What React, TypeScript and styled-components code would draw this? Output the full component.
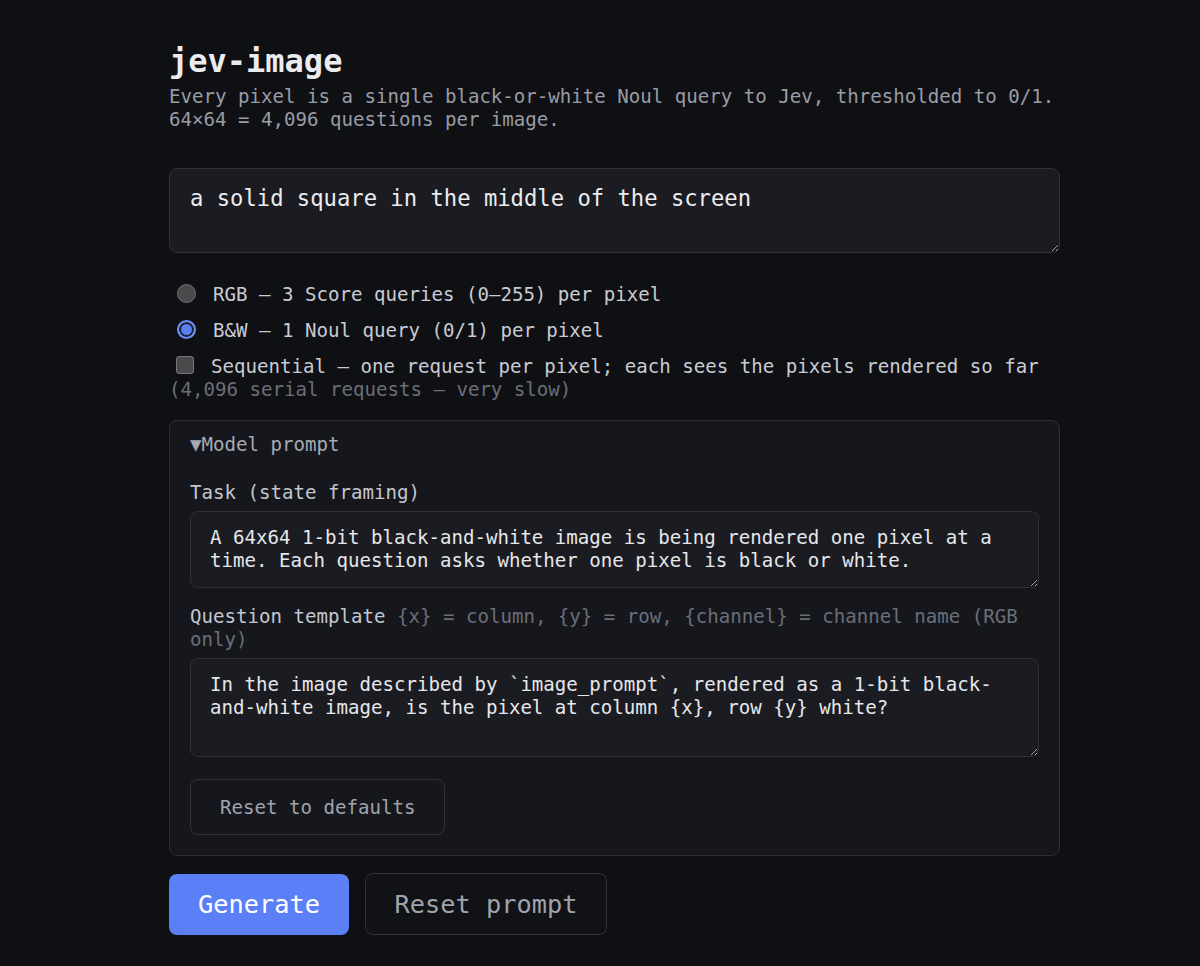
import React from "react";
import styled, { createGlobalStyle } from "styled-components";

const Global = createGlobalStyle`
  html, body { margin: 0; padding: 0; background: #0f1014; }
  body { font-family: "DejaVu Sans Mono", "Liberation Mono", monospace; color: #c9cbd3; }
  * { box-sizing: border-box; }
`;

const Page = styled.div`
  min-height: 966px;
  background: #0f1014;
  padding: 42px 0 40px 169px;
`;

const Column = styled.div`
  width: 891px;
  display: flex;
  flex-direction: column;
`;

const Title = styled.h1`
  margin: 0;
  font-size: 32px;
  line-height: 38px;
  font-weight: bold;
  color: #ececef;
`;

const Subtitle = styled.p`
  margin: 6px 0 0;
  font-size: 19.1px;
  line-height: 22.5px;
  color: #9a9ca6;
`;

const PromptArea = styled.textarea`
  margin-top: 37px;
  width: 100%;
  height: 85px;
  padding: 16px 20px;
  font-family: inherit;
  font-size: 22.2px;
  line-height: 26px;
  color: #ececf0;
  background: #1b1c21;
  border: 1px solid #2e3039;
  border-radius: 8px;
  outline: none;
  resize: vertical;
`;

const Options = styled.div`
  margin-top: 30px;
  display: flex;
  flex-direction: column;
  gap: 13px;
`;

const OptionLabel = styled.label`
  display: block;
  font-size: 19.1px;
  line-height: 23px;
  color: #c9cbd3;
`;

const Radio = styled.input.attrs({ type: "radio" })`
  appearance: none;
  width: 19px;
  height: 19px;
  margin: 0 17px 0 8px;
  vertical-align: -2px;
  border-radius: 50%;
  background: #4a4a4c;
  border: 1px solid #727276;
  &:checked {
    background: #5b7ff5;
    border: 2px solid #6e8ff7;
    box-shadow: inset 0 0 0 2px #1b1d26;
  }
`;

const Check = styled.input.attrs({ type: "checkbox" })`
  appearance: none;
  width: 18px;
  height: 18px;
  margin: 0 17px 0 7px;
  vertical-align: -1px;
  border-radius: 3px;
  background: #4a4a4c;
  border: 1px solid #77777b;
`;

const Hint = styled.span`
  color: #6b6e79;
`;

const Details = styled.details`
  margin-top: 19px;
  background: #15171d;
  border: 1px solid #2b2e37;
  border-radius: 8px;
  padding: 12px 20px 20px;
`;

const Summary = styled.summary`
  list-style: none;
  cursor: pointer;
  font-size: 19.1px;
  line-height: 23px;
  color: #a7aab3;
  &::-webkit-details-marker { display: none; }
`;

const FieldLabel = styled.div<{ $top: number }>`
  margin-top: ${(p) => p.$top}px;
  font-size: 19.1px;
  line-height: 23px;
  color: #c4c6cf;
`;

const ModelArea = styled.textarea<{ $h: number }>`
  display: block;
  margin-top: 7px;
  width: 100%;
  height: ${(p) => p.$h}px;
  padding: 14px 19px;
  font-family: inherit;
  font-size: 19.1px;
  line-height: 23px;
  color: #e6e7eb;
  background: #1b1c21;
  border: 1px solid #2e3039;
  border-radius: 8px;
  outline: none;
  resize: vertical;
`;

const GhostButton = styled.button`
  margin-top: 22px;
  height: 56px;
  padding: 0 29px;
  font-family: inherit;
  font-size: 19.1px;
  color: #a0a3ac;
  background: transparent;
  border: 1px solid #2f323b;
  border-radius: 8px;
`;

const Actions = styled.div`
  margin-top: 17px;
  display: flex;
  align-items: center;
  gap: 16px;
`;

const PrimaryButton = styled.button`
  width: 180px;
  height: 61px;
  font-family: inherit;
  font-size: 25.3px;
  color: #ffffff;
  background: #5b7ff6;
  border: none;
  border-radius: 8px;
`;

const SecondaryButton = styled.button`
  width: 242px;
  height: 62px;
  font-family: inherit;
  font-size: 25.3px;
  color: #a0a3ac;
  background: #111216;
  border: 1px solid #2f323b;
  border-radius: 8px;
`;

export default function App() {
  return (
    <>
      <Global />
      <Page>
        <Column>
          <Title>jev-image</Title>
          <Subtitle>
            Every pixel is a single black-or-white Noul query to Jev, thresholded to 0/1.
            <br />
            64×64 = 4,096 questions per image.
          </Subtitle>
          <PromptArea defaultValue="a solid square in the middle of the screen" />
          <Options>
            <OptionLabel>
              <Radio name="mode" />
              RGB — 3 Score queries (0–255) per pixel
            </OptionLabel>
            <OptionLabel>
              <Radio name="mode" defaultChecked />
              B&amp;W — 1 Noul query (0/1) per pixel
            </OptionLabel>
            <OptionLabel>
              <Check />
              Sequential — one request per pixel; each sees the pixels rendered so far{" "}
              <Hint>(4,096 serial requests — very slow)</Hint>
            </OptionLabel>
          </Options>
          <Details open>
            <Summary>▼Model prompt</Summary>
            <FieldLabel $top={25}>Task (state framing)</FieldLabel>
            <ModelArea
              $h={77}
              defaultValue="A 64x64 1-bit black-and-white image is being rendered one pixel at a time. Each question asks whether one pixel is black or white."
            />
            <FieldLabel $top={17}>
              Question template{" "}
              <Hint>{"{x} = column, {y} = row, {channel} = channel name (RGB only)"}</Hint>
            </FieldLabel>
            <ModelArea
              $h={99}
              defaultValue="In the image described by `image_prompt`, rendered as a 1-bit black-and-white image, is the pixel at column {x}, row {y} white?"
            />
            <GhostButton>Reset to defaults</GhostButton>
          </Details>
          <Actions>
            <PrimaryButton>Generate</PrimaryButton>
            <SecondaryButton>Reset prompt</SecondaryButton>
          </Actions>
        </Column>
      </Page>
    </>
  );
}
